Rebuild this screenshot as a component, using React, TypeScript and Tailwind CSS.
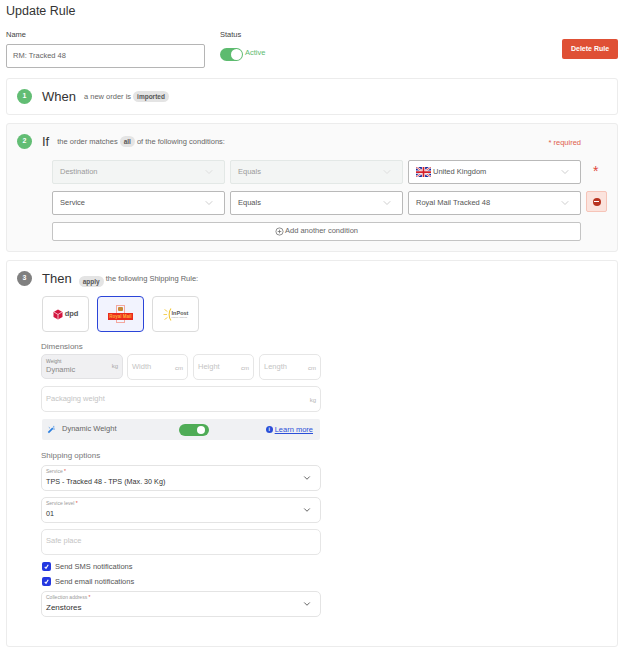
import { ChevronDown } from "lucide-react";

const StepBadge = ({ n, color }: { n: number; color: string }) => (
  <div className={`w-[15px] h-[15px] rounded-full flex items-center justify-center text-white text-[7px] font-bold ${color}`}>
    {n}
  </div>
);

const Pill = ({ children }: { children: string }) => (
  <span className="inline-flex items-center h-[11px] px-[4px] rounded-full bg-[#e4e4e4] text-[6.5px] font-bold text-[#555]">
    {children}
  </span>
);

const UkFlag = () => (
  <svg width="15" height="10" viewBox="0 0 60 40" className="shrink-0">
    <rect width="60" height="40" fill="#1a2a9c" />
    <path d="M0 0L60 40M60 0L0 40" stroke="#fff" strokeWidth="9" />
    <path d="M0 0L60 40M60 0L0 40" stroke="#d3202a" strokeWidth="3" />
    <path d="M30 0V40M0 20H60" stroke="#fff" strokeWidth="13" />
    <path d="M30 0V40M0 20H60" stroke="#d3202a" strokeWidth="7" />
  </svg>
);

const RuleSelect = ({ label, disabled, flag }: { label: string; disabled?: boolean; flag?: boolean }) => (
  <div
    className={`w-[173px] h-[24px] rounded-[2px] border flex items-center justify-between pl-[7px] pr-[9px] text-[7.5px] ${
      disabled ? "bg-[#f3f5f4] border-[#e3e8e6] text-[#9a9a9a]" : "bg-white border-[#b9b9b9] text-[#555]"
    }`}
  >
    <span className="flex items-center gap-[2px]">
      {flag && <UkFlag />}
      {label}
    </span>
    <ChevronDown size={12} strokeWidth={1.5} className={disabled ? "text-[#d5d5d5]" : "text-[#bdbdbd]"} />
  </div>
);

const SizeField = ({ label, unit, width }: { label: string; unit: string; width: string }) => (
  <div className={`${width} h-[26px] rounded-[5px] border border-[#e6e6e6] bg-white flex items-center justify-between px-[4px] text-[7.5px] text-[#c4c4c4]`}>
    <span className="-mt-[1px]">{label}</span>
    <span className="text-[6px] text-[#b5b5b5] mt-[3px]">{unit}</span>
  </div>
);

const FloatSelect = ({ label, value, big }: { label: string; value: string; big?: boolean }) => (
  <div className="relative w-[280px] h-[26px] rounded-[5px] border border-[#e4e4e4] bg-white pl-[4px] pr-[8px] flex items-center justify-between">
    <div className="flex flex-col -mt-[1px]">
      <span className="text-[5px] leading-[7px] text-[#999]">
        {label} <span className="text-[#e0483a]">*</span>
      </span>
      <span className={`${big ? "text-[8px]" : "text-[7.2px]"} leading-[12px] mt-[1px] text-[#333]`}>{value}</span>
    </div>
    <ChevronDown size={10} strokeWidth={2} className="text-[#444]" />
  </div>
);

const Check = ({ label }: { label: string }) => (
  <div className="flex items-center gap-[4px] h-[9px] ml-[1px] text-[7.5px] text-[#555]">
    <span className="w-[9px] h-[9px] rounded-[2px] bg-[#2438e0] flex items-center justify-center">
      <svg width="7" height="7" viewBox="0 0 10 10" fill="none">
        <path d="M2.5 5.5L4.3 7.5L7.5 2.5" stroke="#fff" strokeWidth="1.6" />
      </svg>
    </span>
    {label}
  </div>
);

const CarrierCard = ({ children, selected }: { children: React.ReactNode; selected?: boolean }) => (
  <div
    className={`w-[47px] h-[36px] rounded-[4px] flex items-center justify-center border ${
      selected ? "border-[#2b45d8] bg-[#f2f3fe]" : "border-[#dcdcdc] bg-white"
    }`}
  >
    {children}
  </div>
);

export default function App() {
  return (
    <div className="font-['Liberation_Sans',Arial,sans-serif] antialiased w-[625px] h-[658px] bg-white overflow-hidden pl-[6px] pr-[7px] text-[#444]">
      <h1 className="pt-[1px] text-[12.5px] leading-[20px] text-[#333]">Update Rule</h1>

      {/* Name / status row */}
      <div className="flex mt-[9px] h-[48px]">
        <div className="w-[214px]">
          <div className="text-[7.5px] leading-[10px] text-[#444]">Name</div>
          <div className="mt-[4px] w-[199px] h-[24px] border border-[#b5b5b5] rounded-[2px] flex items-center pl-[6px] text-[7.5px] text-[#666]">
            RM: Tracked 48
          </div>
        </div>
        <div>
          <div className="text-[7.5px] leading-[10px] text-[#444]">Status</div>
          <div className="flex items-start gap-[2px] mt-[8px]">
            <div className="w-[23px] h-[13px] rounded-full bg-[#5dbb6f] flex items-center justify-end pr-[1px]">
              <div className="w-[11px] h-[11px] rounded-full bg-white" />
            </div>
            <span className="text-[7.5px] leading-[10px] text-[#5dbb6f]">Active</span>
          </div>
        </div>
        <button className="ml-auto mt-[9px] w-[56px] h-[20px] rounded-[2px] bg-[#df5035] text-white text-[7px] font-bold">
          Delete Rule
        </button>
      </div>

      {/* When */}
      <section className="h-[37px] rounded-[3px] border border-[#ececec] bg-white flex items-center pl-[10px]">
        <StepBadge n={1} color="bg-[#62bd74]" />
        <span className="ml-[10px] text-[13px] text-[#333]">When</span>
        <span className="ml-[8px] text-[7.5px] text-[#666] mr-[2px]">a new order is</span>
        <Pill>imported</Pill>
      </section>

      {/* If */}
      <section className="mt-[8px] h-[129px] rounded-[3px] border border-[#ececec] bg-[#fafafa] relative">
        <div className="flex items-center pl-[10px] pt-[10px] h-[25px]">
          <StepBadge n={2} color="bg-[#62bd74]" />
          <span className="ml-[10px] text-[13px] leading-[14px] text-[#333]">If</span>
          <span className="ml-[8px] text-[7.5px] text-[#666] mr-[2px]">the order matches</span>
          <Pill>all</Pill>
          <span className="ml-[2px] text-[7.5px] text-[#666]">of the following conditions:</span>
          <span className="ml-auto mr-[36px] mt-[3px] text-[7.5px] text-[#e0604d]">* required</span>
        </div>
        <div className="pl-[45px] mt-[11px] flex flex-col gap-[7px]">
          <div className="flex gap-[5px] items-center">
            <RuleSelect label="Destination" disabled />
            <RuleSelect label="Equals" disabled />
            <RuleSelect label="United Kingdom" flag />
            <span className="ml-[7px] -mt-[2px] text-[14px] leading-[14px] text-[#e0483a]">*</span>
          </div>
          <div className="flex gap-[5px] items-start">
            <RuleSelect label="Service" />
            <RuleSelect label="Equals" />
            <RuleSelect label="Royal Mail Tracked 48" />
            <div className="w-[21px] h-[21px] rounded-[2px] bg-[#fbe3dd] border border-[#f6c4b8] flex items-center justify-center">
              <span className="w-[8px] h-[8px] rounded-full bg-[#b8321f] flex items-center justify-center">
                <span className="w-[5px] h-[1.5px] bg-white" />
              </span>
            </div>
          </div>
          <div className="w-[529px] h-[19px] rounded-[2px] border border-[#c4c4c4] bg-white flex items-center justify-center gap-[1px] text-[7.5px] text-[#666]">
            <svg width="9" height="9" viewBox="0 0 10 10" fill="none" stroke="#666" strokeWidth="0.8">
              <circle cx="5" cy="5" r="4" />
              <path d="M5 3V7M3 5H7" />
            </svg>
            <span className="-mt-[1px]">Add another condition</span>
          </div>
        </div>
      </section>

      {/* Then */}
      <section className="mt-[8px] h-[387px] rounded-[3px] border border-[#ececec] bg-white pl-[10px] pt-[10px]">
        <div className="flex items-center h-[15px]">
          <StepBadge n={3} color="bg-[#808080]" />
          <span className="ml-[10px] text-[13px] leading-[14px] text-[#333]">Then</span>
          <span className="ml-[7px] mr-[2px]"><Pill>apply</Pill></span>
          <span className="text-[7.5px] text-[#666]">the following Shipping Rule:</span>
        </div>

        <div className="ml-[25px] mt-[10px] flex gap-[8px]">
          <CarrierCard>
            <svg width="10" height="11" viewBox="0 0 10 11" className="mr-[2px]">
              <path d="M5 0.5L9.5 3V8L5 10.5L0.5 8V3Z" fill="#d3163f" />
              <path d="M5 5.5L5 10M5 5.5L1 3M5 5.5L9 3" stroke="#fff" strokeWidth="0.7" fill="none" />
            </svg>
            <span className="text-[7.5px] font-bold text-[#555]">dpd</span>
          </CarrierCard>
          <CarrierCard selected>
            <div className="relative w-[25px] h-[18px]">
              <div className="absolute left-[8px] top-0 w-[9px] h-[18px] border border-[#f4a79f]" />
              <div className="absolute left-[10px] top-[2px] w-[5px] h-[4px] bg-[#c78a3a] rounded-[1px]" />
              <div className="absolute left-0 top-[8px] w-[25px] h-[7px] bg-[#ea2a1e] text-[4.5px] leading-[7px] text-center text-[#ffb03a] font-bold whitespace-nowrap">
                Royal Mail
              </div>
            </div>
          </CarrierCard>
          <CarrierCard>
            <svg width="9" height="15" viewBox="0 0 9 15" fill="none">
              <path d="M8 1.5C5.5 4.5 5.5 10.5 8 13.5" stroke="#f2c530" strokeWidth="1.1" />
              <path d="M4 7.5H0.5M4.4 4.5L1.5 2.5M4.4 10.5L1.5 12.5" stroke="#f2c530" strokeWidth="0.8" />
            </svg>
            <div className="flex flex-col text-[#555]">
              <span className="text-[5.5px] leading-[6px] font-bold">InPost</span>
              <span className="text-[2.5px] leading-[3px] text-[#999] whitespace-nowrap">parcel lockers</span>
            </div>
          </CarrierCard>
        </div>

        <div className="ml-[24px] mt-[10px] w-[280px]">
          <div className="text-[8px] leading-[10px] text-[#777]">Dimensions</div>
          <div className="flex gap-[5px] mt-[2px]">
            <div className="w-[82px] -mr-[1px] h-[25px] rounded-[5px] border border-[#e2e2e4] bg-[#f0f0f2] px-[4px] flex items-center justify-between">
              <div className="flex flex-col">
                <span className="text-[5px] leading-[7px] text-[#888]">Weight</span>
                <span className="text-[7.5px] leading-[10px] text-[#888]">Dynamic</span>
              </div>
              <span className="text-[6px] text-[#aaa]">kg</span>
            </div>
            <SizeField label="Width" unit="cm" width="w-[61px]" />
            <SizeField label="Height" unit="cm" width="w-[61px]" />
            <SizeField label="Length" unit="cm" width="w-[62px]" />
          </div>
          <div className="mt-[6px]">
            <SizeField label="Packaging weight" unit="kg" width="w-[280px]" />
          </div>
          <div className="mt-[7px] ml-[1px] w-[278px] h-[21px] rounded-[2px] bg-[#f0f1f3] flex items-center pl-[5px] pr-[7px] text-[7.5px] text-[#666]">
            <svg width="9" height="9" viewBox="0 0 10 10" fill="none" className="shrink-0">
              <path d="M1.5 8.5L6.5 3.5" stroke="#2b7fe0" strokeWidth="1.8" />
              <path d="M7.5 1V3M8.8 4.5H6.8M2 2.5L3.2 3.5" stroke="#2b7fe0" strokeWidth="0.8" />
            </svg>
            <span className="ml-[6px] -mt-[1px] w-[117px]">Dynamic Weight</span>
            <div className="w-[30px] h-[12px] rounded-full bg-[#4fac56] flex items-center justify-end pr-[4px]">
              <div className="w-[8px] h-[8px] rounded-full bg-white" />
            </div>
            <span className="ml-auto flex items-center gap-[2px] text-[#2b4fd8]">
              <span className="w-[7px] h-[7px] rounded-full bg-[#2b4fd8] text-white text-[5px] leading-[7px] text-center font-bold">i</span>
              <span className="underline">Learn more</span>
            </span>
          </div>

          <div className="mt-[11px] text-[8px] leading-[10px] text-[#777]">Shipping options</div>
          <div className="mt-[4px] flex flex-col gap-[6px]">
            <FloatSelect label="Service" value="TPS - Tracked 48 - TPS (Max. 30 Kg)" />
            <FloatSelect label="Service level" value="01" />
            <div className="w-[280px] h-[26px] rounded-[5px] border border-[#e6e6e6] flex items-center pl-[4px] pb-[2px] text-[7.5px] text-[#c4c4c4]">
              Safe place
            </div>
          </div>
          <div className="mt-[7px] flex flex-col gap-[6px]">
            <Check label="Send SMS notifications" />
            <Check label="Send email notifications" />
          </div>
          <div className="mt-[5px]">
            <FloatSelect label="Collection address" value="Zenstores" big />
          </div>
        </div>
      </section>
    </div>
  );
}
